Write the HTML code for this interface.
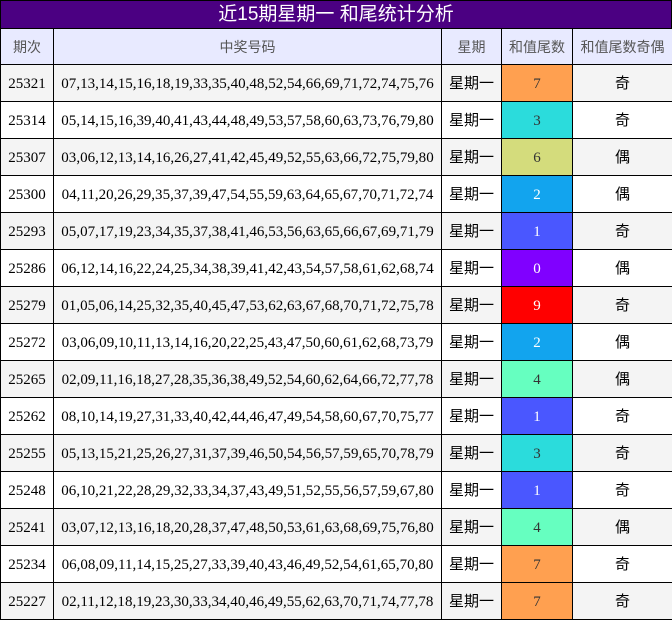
<!DOCTYPE html>
<html><head><meta charset="utf-8"><style>
body{margin:0;width:672px;height:619px;overflow:hidden;background:#fff;font-family:"Liberation Serif",serif;}
.t{background:#4b0082;color:#fff;font-size:19px;line-height:28px;text-align:center;border:1px solid #000;border-bottom:none;box-sizing:border-box;font-family:"Liberation Sans","Noto Sans CJK SC",sans-serif;height:28px}
table{border-collapse:collapse;table-layout:fixed;width:672px}
td,th{border:1px solid #000;padding:0;text-align:center;vertical-align:middle;height:36px;font-size:15px;white-space:nowrap;overflow:hidden}
td{line-height:36px}
td.s{font-family:"Liberation Serif",serif;padding-top:2px;height:34px;line-height:34px}
th{background:#e8eaff;color:#555;font-weight:normal;font-family:"Liberation Sans","Noto Sans CJK SC",sans-serif;height:35px;font-size:14px}
tr:nth-child(even) td{background:#f4f4f4}
td.w{font-family:"Liberation Sans","Noto Sans CJK SC",sans-serif;font-size:15px;padding-top:1px;height:35px;line-height:35px}
td.n{font-size:15px;letter-spacing:0.02px}
td.q{font-family:"Liberation Sans","Noto Sans CJK SC",sans-serif;font-size:15px;padding-top:1px;height:35px;line-height:35px}
</style></head><body>
<div class="t">近15期星期一 和尾统计分析</div>
<table>
<colgroup><col style="width:53px"><col style="width:388px"><col style="width:60px"><col style="width:71px"><col style="width:100px"></colgroup>
<tr><th>期次</th><th>中奖号码</th><th>星期</th><th>和值尾数</th><th>和值尾数奇偶</th></tr>
<tr><td class="s">25321</td><td class="s n">07,13,14,15,16,18,19,33,35,40,48,52,54,66,69,71,72,74,75,76</td><td class="w">星期一</td><td class="s" style="background:#ffa050;color:#333">7</td><td class="q">奇</td></tr>
<tr><td class="s">25314</td><td class="s n">05,14,15,16,39,40,41,43,44,48,49,53,57,58,60,63,73,76,79,80</td><td class="w">星期一</td><td class="s" style="background:#2bdcdc;color:#333">3</td><td class="q">奇</td></tr>
<tr><td class="s">25307</td><td class="s n">03,06,12,13,14,16,26,27,41,42,45,49,52,55,63,66,72,75,79,80</td><td class="w">星期一</td><td class="s" style="background:#d4dc7c;color:#333">6</td><td class="q">偶</td></tr>
<tr><td class="s">25300</td><td class="s n">04,11,20,26,29,35,37,39,47,54,55,59,63,64,65,67,70,71,72,74</td><td class="w">星期一</td><td class="s" style="background:#12a4ee;color:#fff">2</td><td class="q">偶</td></tr>
<tr><td class="s">25293</td><td class="s n">05,07,17,19,23,34,35,37,38,41,46,53,56,63,65,66,67,69,71,79</td><td class="w">星期一</td><td class="s" style="background:#4a57ff;color:#fff">1</td><td class="q">奇</td></tr>
<tr><td class="s">25286</td><td class="s n">06,12,14,16,22,24,25,34,38,39,41,42,43,54,57,58,61,62,68,74</td><td class="w">星期一</td><td class="s" style="background:#8000ff;color:#fff">0</td><td class="q">偶</td></tr>
<tr><td class="s">25279</td><td class="s n">01,05,06,14,25,32,35,40,45,47,53,62,63,67,68,70,71,72,75,78</td><td class="w">星期一</td><td class="s" style="background:#ff0000;color:#fff">9</td><td class="q">奇</td></tr>
<tr><td class="s">25272</td><td class="s n">03,06,09,10,11,13,14,16,20,22,25,43,47,50,60,61,62,68,73,79</td><td class="w">星期一</td><td class="s" style="background:#12a4ee;color:#fff">2</td><td class="q">偶</td></tr>
<tr><td class="s">25265</td><td class="s n">02,09,11,16,18,27,28,35,36,38,49,52,54,60,62,64,66,72,77,78</td><td class="w">星期一</td><td class="s" style="background:#66ffc0;color:#333">4</td><td class="q">偶</td></tr>
<tr><td class="s">25262</td><td class="s n">08,10,14,19,27,31,33,40,42,44,46,47,49,54,58,60,67,70,75,77</td><td class="w">星期一</td><td class="s" style="background:#4a57ff;color:#fff">1</td><td class="q">奇</td></tr>
<tr><td class="s">25255</td><td class="s n">05,13,15,21,25,26,27,31,37,39,46,50,54,56,57,59,65,70,78,79</td><td class="w">星期一</td><td class="s" style="background:#2bdcdc;color:#333">3</td><td class="q">奇</td></tr>
<tr><td class="s">25248</td><td class="s n">06,10,21,22,28,29,32,33,34,37,43,49,51,52,55,56,57,59,67,80</td><td class="w">星期一</td><td class="s" style="background:#4a57ff;color:#fff">1</td><td class="q">奇</td></tr>
<tr><td class="s">25241</td><td class="s n">03,07,12,13,16,18,20,28,37,47,48,50,53,61,63,68,69,75,76,80</td><td class="w">星期一</td><td class="s" style="background:#66ffc0;color:#333">4</td><td class="q">偶</td></tr>
<tr><td class="s">25234</td><td class="s n">06,08,09,11,14,15,25,27,33,39,40,43,46,49,52,54,61,65,70,80</td><td class="w">星期一</td><td class="s" style="background:#ffa050;color:#333">7</td><td class="q">奇</td></tr>
<tr><td class="s">25227</td><td class="s n">02,11,12,18,19,23,30,33,34,40,46,49,55,62,63,70,71,74,77,78</td><td class="w">星期一</td><td class="s" style="background:#ffa050;color:#333">7</td><td class="q">奇</td></tr>
</table>
</body></html>
